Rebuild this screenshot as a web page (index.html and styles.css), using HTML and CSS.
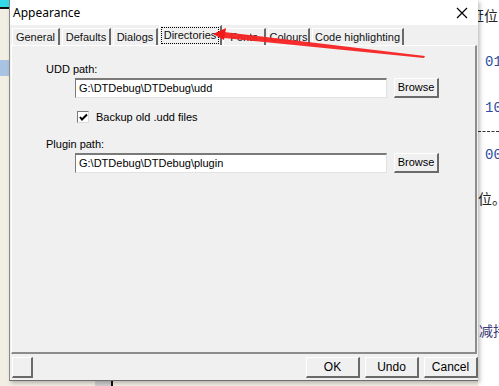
FILE: index.html
```html
<!DOCTYPE html>
<html lang="en">

<head>
    <meta charset="UTF-8">
    <title>Appearance</title>
    <link rel="stylesheet" href="styles.css">
</head>

<body>
    <div class="screen">
        <!-- background app, left side -->
        <div class="left-strip">
            <div class="cyan"></div>
            <div class="sel"></div>
        </div>

        <!-- dialog -->
        <div class="dialog">
            <div class="titlebar">
                <span class="title">Appearance</span>
                <svg class="close" width="12" height="12" viewBox="0 0 12 12">
                    <path d="M1 1L11 11M11 1L1 11" stroke="#000" stroke-width="1.2" fill="none"/>
                </svg>
            </div>

            <div class="tabs">
                <span class="tab t-general">General</span>
                <span class="tab t-defaults">Defaults</span>
                <span class="tab t-dialogs">Dialogs</span>
                <span class="tab active"><span class="focus">Directories</span></span>
                <span class="tab t-fonts">Fonts</span>
                <span class="tab t-colours">Colours</span>
                <span class="tab t-code">Code highlighting</span>
            </div>

            <div class="panel">
                <div class="label">UDD path:</div>
                <div class="row">
                    <div class="input">G:\DTDebug\DTDebug\udd</div>
                    <span class="btn browse">Browse</span>
                </div>
                <div class="check">
                    <span class="box">
                        <svg width="9" height="9" viewBox="0 0 9 9">
                            <path d="M1 4L3 6.5L8 1.5" stroke="#000" stroke-width="2" fill="none"/>
                        </svg>
                    </span>
                    Backup old .udd files
                </div>
                <div class="label plugin">Plugin path:</div>
                <div class="row">
                    <div class="input">G:\DTDebug\DTDebug\plugin</div>
                    <span class="btn browse">Browse</span>
                </div>
            </div>

            <div class="footer">
                <span class="btn small"></span>
                <span class="spacer"></span>
                <span class="btn wide">OK</span>
                <span class="btn wide">Undo</span>
                <span class="btn wide">Cancel</span>
            </div>
        </div>

        <!-- background app, right side -->
        <div class="right-strip">
            <div class="cn top">赶位</div>
            <div class="num n1">01</div>
            <div class="num n2">10</div>
            <div class="dash"></div>
            <div class="num n3">00</div>
            <div class="cn mid">位。</div>
            <div class="cn low">减持</div>
        </div>

        <!-- annotation arrow -->
        <svg class="arrow" width="499" height="386" viewBox="0 0 499 386">
            <polygon points="224,32 425,56 424,58 224,38" fill="#f52222" opacity="0.95"/>
            <polygon points="213,34 226,28 224,40" fill="#f01818"/>
        </svg>

        <div class="bottom-junk"></div>
    </div>
</body>

</html>
```

FILE: styles.css
```css
body {
    margin: 0;
    background: #f1eee4;
    font-family: "Liberation Sans", Arial, sans-serif;
    font-size: 11px;
    color: #000;
}

.screen {
    position: relative;
    width: 499px;
    height: 386px;
    display: flex;
    overflow: hidden;
}

.left-strip {
    width: 9px;
    flex: none;
    background: #f1eee4;
}

.cyan {
    height: 7px;
    background: #33d9e6;
    border-bottom: 2px solid #111;
}

.sel {
    margin-top: 51px;
    height: 16px;
    background: #a9c3e2;
}

.dialog {
    width: 468px;
    height: 380px;
    flex: none;
    background: #f0f0f0;
    border-left: 1px solid #8a8a8a;
    border-bottom: 1px solid #6e6e6e;
    display: flex;
    flex-direction: column;
    box-shadow: 2px 2px 4px rgba(0, 0, 0, 0.25);
    z-index: 1;
}

.titlebar {
    height: 25px;
    background: #fff;
    display: flex;
    align-items: center;
    justify-content: space-between;
    padding: 0 10px 0 3px;
}

.title {
    font-family: "Noto Sans", sans-serif;
    font-size: 12px;
}

.tabs {
    display: flex;
    align-items: flex-end;
    gap: 2px;
    height: 20px;
    padding-left: 2px;
}

.tab {
    height: 17px;
    line-height: 16px;
    text-align: center;
    white-space: nowrap;
    box-sizing: border-box;
    border-left: 1px solid #fff;
    border-top: 1px solid #fff;
    border-right: 2px solid #6a6a6a;
    background: #f0f0f0;
    color: #111;
}

.t-general { width: 48px; }
.t-defaults { width: 49px; }
.t-dialogs { width: 45px; }
.t-fonts { width: 43px; }
.t-colours { width: 42px; }
.t-code { width: 92px; }

.tab.active {
    width: 63px;
    height: 20px;
    padding: 1px 1px 0;
    margin: 0 -1px;
}

.focus {
    display: block;
    border: 1px dotted #000;
    line-height: 15px;
}

.panel {
    height: 309px;
    margin: 0 1px 0 1px;
    box-sizing: border-box;
    border-left: 1px solid #fff;
    border-top: 1px solid #fff;
    border-right: 2px solid #8c8c8c;
    border-bottom: 2px solid #8c8c8c;
    padding: 17px 0 0 34px;
}

.label {
    height: 13px;
    line-height: 13px;
}

.label.plugin {
    margin-top: 14px;
}

.row {
    display: flex;
    align-items: center;
    gap: 7px;
    margin: 2px 0 0 29px;
}

.input {
    width: 312px;
    height: 20px;
    box-sizing: border-box;
    background: #fff;
    border-top: 2px solid #7a7a7a;
    border-left: 1px solid #7a7a7a;
    border-right: 1px solid #e2e2e2;
    border-bottom: 1px solid #e2e2e2;
    padding-left: 3px;
    line-height: 17px;
}

.btn {
    box-sizing: border-box;
    height: 20px;
    line-height: 17px;
    text-align: center;
    background: #f0f0f0;
    border-left: 1px solid #fff;
    border-top: 1px solid #fff;
    border-right: 2px solid #6a6a6a;
    border-bottom: 2px solid #6a6a6a;
}

.browse {
    width: 45px;
}

.check {
    display: flex;
    align-items: center;
    gap: 7px;
    margin: 12px 0 0 31px;
    height: 14px;
}

.box {
    width: 12px;
    height: 12px;
    box-sizing: border-box;
    background: #fff;
    border-top: 1px solid #7a7a7a;
    border-left: 1px solid #7a7a7a;
    border-right: 1px solid #dcdcdc;
    border-bottom: 1px solid #dcdcdc;
    display: flex;
    align-items: center;
    justify-content: center;
}

.footer {
    display: flex;
    align-items: center;
    gap: 5px;
    padding: 3px 0 0 2px;
}

.spacer {
    flex: 1;
}

.btn.small {
    width: 21px;
    height: 21px;
}

.btn.wide {
    width: 54px;
    height: 21px;
    line-height: 18px;
    font-size: 12px;
}

.right-strip {
    flex: 1;
    background: #fff;
    font-size: 14px;
    line-height: 16px;
    white-space: nowrap;
    overflow: hidden;
}

.cn {
    font-family: "Noto Sans CJK SC", sans-serif;
    color: #222;
    margin-left: -6px;
}

.cn.top {
    margin-top: 7px;
    margin-left: -8px;
}

.num {
    font-family: "Liberation Mono", monospace;
    color: #2a4fa0;
    margin-left: 7px;
}

.num.n1 {
    margin-top: 31px;
}

.num.n2 {
    margin-top: 30px;
}

.dash {
    margin-top: 15px;
    border-top: 1px dashed #333;
}

.num.n3 {
    margin-top: 15px;
}

.cn.mid {
    margin-top: 27px;
    margin-left: 0;
}

.cn.low {
    margin-top: 116px;
    margin-left: 1px;
    color: #3a3a7a;
}

.arrow {
    position: absolute;
    left: 0;
    top: 0;
    z-index: 2;
    pointer-events: none;
}

.bottom-junk {
    position: absolute;
    left: 95px;
    top: 381px;
    width: 16px;
    height: 5px;
    background: #cfcfcf;
    border-right: 2px solid #111;
}
```
